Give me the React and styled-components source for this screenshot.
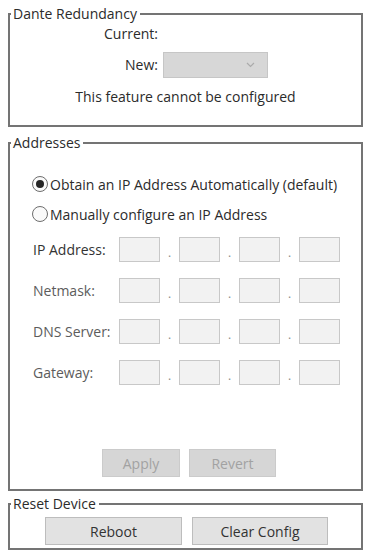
import React from "react";
import styled, { createGlobalStyle } from "styled-components";

const GlobalStyle = createGlobalStyle`
  html, body {
    margin: 0;
    padding: 0;
    background: #ffffff;
  }
  body {
    font-family: "Open Sans", "DejaVu Sans", sans-serif;
    font-size: 14px;
    color: #333333;
  }
`;

const ipRows = [
  { label: "IP Address:", dark: true },
  { label: "Netmask:" },
  { label: "DNS Server:" },
  { label: "Gateway:" },
];

const App = () => {
  return (
    <>
      <GlobalStyle />
      <Page>
        <Group>
          <Legend>Dante Redundancy</Legend>
          <RedundancyGrid>
            <FieldLabel>Current:</FieldLabel>
            <span />
            <FieldLabel>New:</FieldLabel>
            <Select>
              <Chevron width="9" height="6" viewBox="0 0 9 6">
                <path d="M1 1 L4.5 4.5 L8 1" fill="none" stroke="#ababab" strokeWidth="1.2" />
              </Chevron>
            </Select>
          </RedundancyGrid>
          <Note>This feature cannot be configured</Note>
        </Group>

        <Group $gap={8}>
          <Legend>Addresses</Legend>
          <AddressBody>
            <RadioRow>
              <Radio $checked />
              <RadioText>Obtain an IP Address Automatically (default)</RadioText>
            </RadioRow>
            <RadioRow $top={12}>
              <Radio />
              <RadioText>Manually configure an IP Address</RadioText>
            </RadioRow>
            <IpList>
              {ipRows.map((row) => (
                <IpRow key={row.label}>
                  <IpLabel $dark={row.dark}>{row.label}</IpLabel>
                  {[0, 1, 2, 3].map((i) => (
                    <React.Fragment key={i}>
                      {i > 0 && <Dot>.</Dot>}
                      <Octet />
                    </React.Fragment>
                  ))}
                </IpRow>
              ))}
            </IpList>
            <ButtonRow>
              <DisabledButton $w={78}>Apply</DisabledButton>
              <DisabledButton $w={87}>Revert</DisabledButton>
            </ButtonRow>
          </AddressBody>
        </Group>

        <Group $gap={5}>
          <Legend>Reset Device</Legend>
          <ResetRow>
            <Button $w={137}>Reboot</Button>
            <Button $w={136}>Clear Config</Button>
          </ResetRow>
        </Group>
      </Page>
    </>
  );
};

export default App;

const Page = styled.div`
  width: 370px;
  height: 551px;
  box-sizing: border-box;
  padding: 6px 7px 0 8px;
  display: flex;
  flex-direction: column;
  overflow: hidden;
`;

const Group = styled.fieldset`
  margin: ${(p) => p.$gap || 0}px 0 0 0;
  padding: 0;
  border: 2px solid #747474;
  min-width: 0;
`;

const Legend = styled.legend`
  margin-left: 1px;
  padding: 0 3px 0 2px;
  font-size: 14px;
  line-height: 16px;
  color: #2b2b2b;
`;

const RedundancyGrid = styled.div`
  display: grid;
  grid-template-columns: 148px 105px;
  column-gap: 5px;
  row-gap: 8px;
  padding-top: 2px;
  grid-template-rows: 20px 26px;
  align-items: center;
`;

const FieldLabel = styled.div`
  text-align: right;
  color: #2b2b2b;
  line-height: 16px;
`;

const Select = styled.div`
  height: 26px;
  box-sizing: border-box;
  background: #d7d7d7;
  border: 1px solid #c6c6c6;
  display: flex;
  align-items: center;
  justify-content: flex-end;
  padding-right: 12px;
`;

const Chevron = styled.svg`
  display: block;
`;

const Note = styled.div`
  margin-top: 11px;
  margin-bottom: 20px;
  text-align: center;
  line-height: 16px;
  color: #2b2b2b;
`;

const AddressBody = styled.div`
  padding: 24px 0 12px 22px;
  display: flex;
  flex-direction: column;
`;

const RadioRow = styled.div`
  display: flex;
  align-items: center;
  height: 18px;
  margin-top: ${(p) => p.$top || 0}px;
`;

const Radio = styled.span`
  width: 16px;
  height: 16px;
  box-sizing: border-box;
  border-radius: 50%;
  border: 1px solid #6d6d6d;
  background: #fafafa;
  display: flex;
  align-items: center;
  justify-content: center;
  flex-shrink: 0;

  &::after {
    content: "";
    width: 8px;
    height: 8px;
    border-radius: 50%;
    background: ${(p) => (p.$checked ? "#262626" : "transparent")};
  }
`;

const RadioText = styled.span`
  margin-left: 2px;
  color: #2b2b2b;
  white-space: nowrap;
`;

const IpList = styled.div`
  margin-top: 14px;
  display: flex;
  flex-direction: column;
  gap: 16px;
`;

const IpRow = styled.div`
  display: flex;
  align-items: center;
  height: 25px;
`;

const IpLabel = styled.div`
  width: 87px;
  padding-left: 1px;
  box-sizing: border-box;
  color: ${(p) => (p.$dark ? "#333333" : "#5c5c5c")};
  white-space: nowrap;
`;

const Octet = styled.div`
  width: 41px;
  height: 25px;
  box-sizing: border-box;
  background: #f2f2f2;
  border: 1px solid #c8c8c8;
`;

const Dot = styled.span`
  width: 19px;
  text-align: center;
  color: #8a8a8a;
  font-size: 12px;
  line-height: 12px;
  padding-top: 6px;
`;

const ButtonRow = styled.div`
  margin-top: 64px;
  display: flex;
  gap: 9px;
  padding-left: 70px;
`;

const DisabledButton = styled.div`
  width: ${(p) => p.$w}px;
  height: 28px;
  box-sizing: border-box;
  background: #d6d6d6;
  border: 1px solid #cbcbcb;
  color: #a2a2a2;
  display: flex;
  align-items: center;
  justify-content: center;
`;

const ResetRow = styled.div`
  display: flex;
  justify-content: center;
  gap: 10px;
  padding: 5px 0 3px 2px;
`;

const Button = styled.div`
  width: ${(p) => p.$w}px;
  height: 28px;
  box-sizing: border-box;
  background: #e2e2e2;
  border: 1px solid #bdbdbd;
  color: #333333;
  display: flex;
  align-items: center;
  justify-content: center;
`;
